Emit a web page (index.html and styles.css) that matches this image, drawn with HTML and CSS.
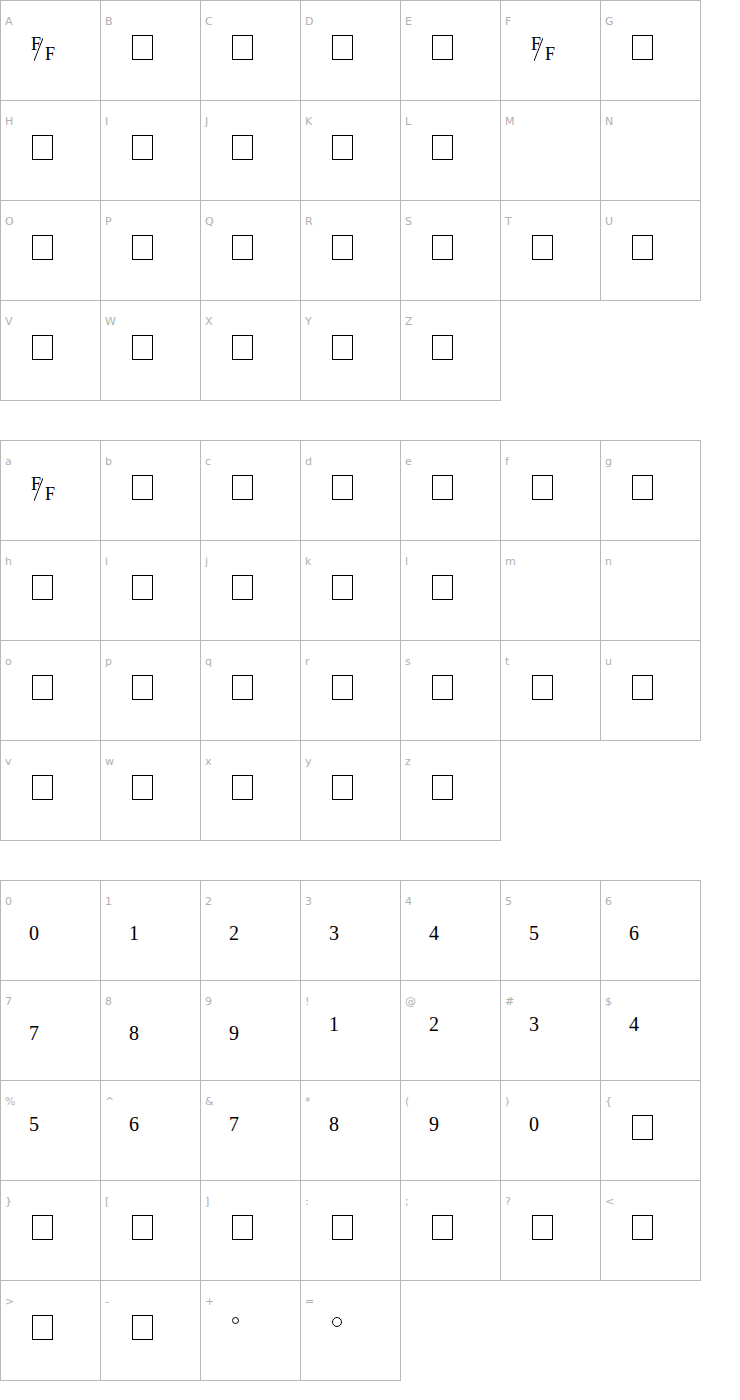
FILE: index.html
```html
<!DOCTYPE html>
<html>
<head>
<meta charset="utf-8">
<link rel="stylesheet" href="styles.css">
</head>
<body>
<div class="grid">
  <div class="cell"><span class="lbl">A</span><div class="ff"><span class="fa">F</span><span class="sl"></span><span class="fb">F</span></div></div>
  <div class="cell"><span class="lbl">B</span><div class="box"></div></div>
  <div class="cell"><span class="lbl">C</span><div class="box"></div></div>
  <div class="cell"><span class="lbl">D</span><div class="box"></div></div>
  <div class="cell"><span class="lbl">E</span><div class="box"></div></div>
  <div class="cell"><span class="lbl">F</span><div class="ff"><span class="fa">F</span><span class="sl"></span><span class="fb">F</span></div></div>
  <div class="cell"><span class="lbl">G</span><div class="box"></div></div>
  <div class="cell"><span class="lbl">H</span><div class="box"></div></div>
  <div class="cell"><span class="lbl">I</span><div class="box"></div></div>
  <div class="cell"><span class="lbl">J</span><div class="box"></div></div>
  <div class="cell"><span class="lbl">K</span><div class="box"></div></div>
  <div class="cell"><span class="lbl">L</span><div class="box"></div></div>
  <div class="cell"><span class="lbl">M</span></div>
  <div class="cell"><span class="lbl">N</span></div>
  <div class="cell"><span class="lbl">O</span><div class="box"></div></div>
  <div class="cell"><span class="lbl">P</span><div class="box"></div></div>
  <div class="cell"><span class="lbl">Q</span><div class="box"></div></div>
  <div class="cell"><span class="lbl">R</span><div class="box"></div></div>
  <div class="cell"><span class="lbl">S</span><div class="box"></div></div>
  <div class="cell"><span class="lbl">T</span><div class="box"></div></div>
  <div class="cell"><span class="lbl">U</span><div class="box"></div></div>
  <div class="cell"><span class="lbl">V</span><div class="box"></div></div>
  <div class="cell"><span class="lbl">W</span><div class="box"></div></div>
  <div class="cell"><span class="lbl">X</span><div class="box"></div></div>
  <div class="cell"><span class="lbl">Y</span><div class="box"></div></div>
  <div class="cell"><span class="lbl">Z</span><div class="box"></div></div>
</div>

<div class="grid">
  <div class="cell"><span class="lbl">a</span><div class="ff"><span class="fa">F</span><span class="sl"></span><span class="fb">F</span></div></div>
  <div class="cell"><span class="lbl">b</span><div class="box"></div></div>
  <div class="cell"><span class="lbl">c</span><div class="box"></div></div>
  <div class="cell"><span class="lbl">d</span><div class="box"></div></div>
  <div class="cell"><span class="lbl">e</span><div class="box"></div></div>
  <div class="cell"><span class="lbl">f</span><div class="box"></div></div>
  <div class="cell"><span class="lbl">g</span><div class="box"></div></div>
  <div class="cell"><span class="lbl">h</span><div class="box"></div></div>
  <div class="cell"><span class="lbl">i</span><div class="box"></div></div>
  <div class="cell"><span class="lbl">j</span><div class="box"></div></div>
  <div class="cell"><span class="lbl">k</span><div class="box"></div></div>
  <div class="cell"><span class="lbl">l</span><div class="box"></div></div>
  <div class="cell"><span class="lbl">m</span></div>
  <div class="cell"><span class="lbl">n</span></div>
  <div class="cell"><span class="lbl">o</span><div class="box"></div></div>
  <div class="cell"><span class="lbl">p</span><div class="box"></div></div>
  <div class="cell"><span class="lbl">q</span><div class="box"></div></div>
  <div class="cell"><span class="lbl">r</span><div class="box"></div></div>
  <div class="cell"><span class="lbl">s</span><div class="box"></div></div>
  <div class="cell"><span class="lbl">t</span><div class="box"></div></div>
  <div class="cell"><span class="lbl">u</span><div class="box"></div></div>
  <div class="cell"><span class="lbl">v</span><div class="box"></div></div>
  <div class="cell"><span class="lbl">w</span><div class="box"></div></div>
  <div class="cell"><span class="lbl">x</span><div class="box"></div></div>
  <div class="cell"><span class="lbl">y</span><div class="box"></div></div>
  <div class="cell"><span class="lbl">z</span><div class="box"></div></div>
</div>

<div class="grid">
  <div class="cell"><span class="lbl">0</span><div class="dg">0</div></div>
  <div class="cell"><span class="lbl">1</span><div class="dg">1</div></div>
  <div class="cell"><span class="lbl">2</span><div class="dg">2</div></div>
  <div class="cell"><span class="lbl">3</span><div class="dg">3</div></div>
  <div class="cell"><span class="lbl">4</span><div class="dg">4</div></div>
  <div class="cell"><span class="lbl">5</span><div class="dg">5</div></div>
  <div class="cell"><span class="lbl">6</span><div class="dg">6</div></div>
  <div class="cell"><span class="lbl">7</span><div class="dg">7</div></div>
  <div class="cell"><span class="lbl">8</span><div class="dg">8</div></div>
  <div class="cell"><span class="lbl">9</span><div class="dg">9</div></div>
  <div class="cell"><span class="lbl">!</span><div class="dg up">1</div></div>
  <div class="cell"><span class="lbl">@</span><div class="dg up">2</div></div>
  <div class="cell"><span class="lbl">#</span><div class="dg up">3</div></div>
  <div class="cell"><span class="lbl">$</span><div class="dg up">4</div></div>
  <div class="cell"><span class="lbl">%</span><div class="dg up">5</div></div>
  <div class="cell"><span class="lbl">^</span><div class="dg up">6</div></div>
  <div class="cell"><span class="lbl">&amp;</span><div class="dg up">7</div></div>
  <div class="cell"><span class="lbl">*</span><div class="dg up">8</div></div>
  <div class="cell"><span class="lbl">(</span><div class="dg up">9</div></div>
  <div class="cell"><span class="lbl">)</span><div class="dg up">0</div></div>
  <div class="cell"><span class="lbl">{</span><div class="box"></div></div>
  <div class="cell"><span class="lbl">}</span><div class="box"></div></div>
  <div class="cell"><span class="lbl">[</span><div class="box"></div></div>
  <div class="cell"><span class="lbl">]</span><div class="box"></div></div>
  <div class="cell"><span class="lbl">:</span><div class="box"></div></div>
  <div class="cell"><span class="lbl">;</span><div class="box"></div></div>
  <div class="cell"><span class="lbl">?</span><div class="box"></div></div>
  <div class="cell"><span class="lbl">&lt;</span><div class="box"></div></div>
  <div class="cell"><span class="lbl">&gt;</span><div class="box"></div></div>
  <div class="cell"><span class="lbl">-</span><div class="box"></div></div>
  <div class="cell"><span class="lbl">+</span><div class="ring small"></div></div>
  <div class="cell"><span class="lbl">=</span><div class="ring"></div></div>
</div>
</body>
</html>
```

FILE: styles.css
```css
html, body {
  margin: 0;
  padding: 0;
  background: #fff;
}

.grid {
  display: grid;
  grid-template-columns: repeat(7, 100px);
  grid-auto-rows: 100px;
  margin-bottom: 40px;
}

.cell {
  width: 101px;
  height: 101px;
  box-sizing: border-box;
  border: 1px solid #b8b8b8;
}

.lbl {
  display: block;
  padding: 14px 0 0 4px;
  font: 11px/13px "DejaVu Sans", sans-serif;
  color: #b0b0b0;
}

.box {
  width: 21px;
  height: 25px;
  box-sizing: border-box;
  border: 1.5px solid #000;
  margin: 7px 0 0 31px;
}

.dg {
  font: 20px/24px "Liberation Serif", serif;
  color: #000;
  margin: 13px 0 0 28px;
}

.dg.up {
  margin-top: 4px;
}

.ff {
  display: flex;
  align-items: flex-start;
  margin: 7px 0 0 30px;
  font: 18px/18px "Liberation Serif", serif;
  color: #000;
}

.fb {
  margin: 10px 0 0 2px;
}

.sl {
  width: 9px;
  height: 23px;
  margin: 3px 0 0 -7px;
  background: linear-gradient(to bottom right, transparent calc(50% - 0.9px), #000 50%, transparent calc(50% + 0.9px));
}

.ring {
  width: 10px;
  height: 10px;
  box-sizing: border-box;
  border: 1.3px solid #000;
  border-radius: 50%;
  margin: 9px 0 0 31px;
}

.ring.small {
  width: 7px;
  height: 7px;
}
```
